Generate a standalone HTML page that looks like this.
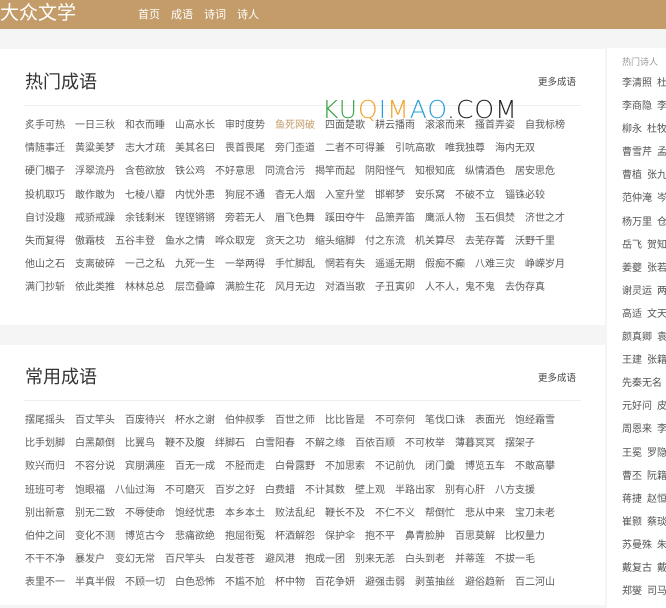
<!DOCTYPE html>
<html><head><meta charset="utf-8"><style>
*{margin:0;padding:0;box-sizing:border-box}
body{width:666px;height:595px;overflow:hidden;background:#f5f5f5;font-family:"Liberation Sans","Noto Sans CJK SC",sans-serif;position:relative}
.hd{position:absolute;left:0;top:0;width:666px;height:29px;background:#c49c69}
.logo{position:absolute;left:0;top:2px;font-size:19px;color:#fff;line-height:24px}
.nav{position:absolute;left:138px;top:8px;font-size:11px;color:#fff;line-height:14px}
.nav span{margin-right:11px}
.panel{position:absolute;left:0;width:605px;background:#fff}
.p1{top:49px;height:276px}
.p2{top:345px;height:260px}
.title{position:absolute;left:25px;font-size:18px;color:#333;line-height:22px}
.more{position:absolute;left:538px;font-size:9.5px;color:#444}
.line{position:absolute;left:24px;width:557px;height:1px;background:#eee}
.rows{position:absolute;left:25px;width:570px;font-size:10px;color:#5a5a5a}
.r{height:23.2px;line-height:14px;white-space:nowrap}
.r span{margin-right:10px}
.side{position:absolute;left:607px;top:48px;width:59px;height:560px;background:#fff;overflow:hidden}
.side .t{position:absolute;left:15px;top:7px;font-size:9px;color:#999}
.side .l{position:absolute;left:15px;top:29px;font-size:10px;color:#555;white-space:nowrap}
.side .l div{height:23.1px;line-height:14px}
.side span{margin-right:5px}
.wm{position:absolute;left:322px;top:97px;font-size:25px;line-height:26px;letter-spacing:1px;font-family:"DejaVu Sans",sans-serif;font-weight:300}
</style></head><body>
<div class="hd"><div class="logo">大众文学</div><div class="nav"><span>首页</span><span>成语</span><span>诗词</span><span>诗人</span></div></div>

<div class="panel p1">
<div class="title" style="top:22px">热门成语</div>
<div class="more" style="top:25px">更多成语</div>
<div class="line" style="top:56px"></div>
<div class="rows" style="top:70px">
<div class="r"><span>炙手可热</span><span>一日三秋</span><span>和衣而睡</span><span>山高水长</span><span>审时度势</span><span style="color:#c49c69">鱼死网破</span><span>四面楚歌</span><span>耕云播雨</span><span>滚滚而来</span><span>搔首弄姿</span><span>自我标榜</span></div>
<div class="r"><span>情随事迁</span><span>黄粱美梦</span><span>志大才疏</span><span>美其名曰</span><span>畏首畏尾</span><span>旁门歪道</span><span>二者不可得兼</span><span>引吭高歌</span><span>唯我独尊</span><span>海内无双</span></div>
<div class="r"><span>硬门楣子</span><span>浮翠流丹</span><span>含苞欲放</span><span>铁公鸡</span><span>不好意思</span><span>同流合污</span><span>揭竿而起</span><span>阴阳怪气</span><span>知根知底</span><span>纵情酒色</span><span>居安思危</span></div>
<div class="r"><span>投机取巧</span><span>敢作敢为</span><span>七棱八瓣</span><span>内忧外患</span><span>狗屁不通</span><span>杳无人烟</span><span>入室升堂</span><span>邯郸梦</span><span>安乐窝</span><span>不破不立</span><span>锱铢必较</span></div>
<div class="r"><span>自讨没趣</span><span>戒骄戒躁</span><span>余钱剩米</span><span>铿铿锵锵</span><span>旁若无人</span><span>眉飞色舞</span><span>蹊田夺牛</span><span>品箫弄笛</span><span>鹰派人物</span><span>玉石俱焚</span><span>济世之才</span></div>
<div class="r"><span>失而复得</span><span>傲霜枝</span><span>五谷丰登</span><span>鱼水之情</span><span>哗众取宠</span><span>贪天之功</span><span>缩头缩脚</span><span>付之东流</span><span>机关算尽</span><span>去芜存菁</span><span>沃野千里</span></div>
<div class="r"><span>他山之石</span><span>支离破碎</span><span>一己之私</span><span>九死一生</span><span>一举两得</span><span>手忙脚乱</span><span>惘若有失</span><span>遥遥无期</span><span>假痴不癫</span><span>八难三灾</span><span>峥嵘岁月</span></div>
<div class="r"><span>满门抄斩</span><span>依此类推</span><span>林林总总</span><span>层峦叠嶂</span><span>满脸生花</span><span>风月无边</span><span>对酒当歌</span><span>子丑寅卯</span><span>人不人，鬼不鬼</span><span>去伪存真</span></div>
</div>
</div>

<div class="wm"><span style="color:#2e9e3e">K</span><span style="color:#3aa84a">U</span><span style="color:#f0a22a">Q</span><span style="color:#2a9fd8">I</span><span style="color:#f0a22a">M</span><span style="color:#2a9fd8">A</span><span style="color:#2a9fd8">O</span><span style="color:#222">.COM</span></div>

<div class="panel p2">
<div class="title" style="top:21px">常用成语</div>
<div class="more" style="top:25px">更多成语</div>
<div class="line" style="top:55px"></div>
<div class="rows" style="top:69px">
<div class="r"><span>摆尾摇头</span><span>百丈竿头</span><span>百废待兴</span><span>杯水之谢</span><span>伯仲叔季</span><span>百世之师</span><span>比比皆是</span><span>不可奈何</span><span>笔伐口诛</span><span>表面光</span><span>饱经霜雪</span></div>
<div class="r"><span>比手划脚</span><span>白黑颠倒</span><span>比翼鸟</span><span>鞭不及腹</span><span>绊脚石</span><span>白雪阳春</span><span>不解之缘</span><span>百依百顺</span><span>不可枚举</span><span>薄暮冥冥</span><span>摆架子</span></div>
<div class="r"><span>败兴而归</span><span>不容分说</span><span>宾朋满座</span><span>百无一成</span><span>不胫而走</span><span>白骨露野</span><span>不加思索</span><span>不记前仇</span><span>闭门羹</span><span>博览五车</span><span>不敢高攀</span></div>
<div class="r"><span>班班可考</span><span>饱眼福</span><span>八仙过海</span><span>不可磨灭</span><span>百岁之好</span><span>白费蜡</span><span>不计其数</span><span>壁上观</span><span>半路出家</span><span>别有心肝</span><span>八方支援</span></div>
<div class="r"><span>别出新意</span><span>别无二致</span><span>不辱使命</span><span>饱经忧患</span><span>本乡本土</span><span>败法乱纪</span><span>鞭长不及</span><span>不仁不义</span><span>帮倒忙</span><span>悲从中来</span><span>宝刀未老</span></div>
<div class="r"><span>伯仲之间</span><span>变化不测</span><span>博览古今</span><span>悲痛欲绝</span><span>抱屈衔冤</span><span>杯酒解怨</span><span>保护伞</span><span>抱不平</span><span>鼻青脸肿</span><span>百思莫解</span><span>比权量力</span></div>
<div class="r"><span>不干不净</span><span>暴发户</span><span>变幻无常</span><span>百尺竿头</span><span>白发苍苍</span><span>避风港</span><span>抱成一团</span><span>别来无恙</span><span>白头到老</span><span>并蒂莲</span><span>不拔一毛</span></div>
<div class="r"><span>表里不一</span><span>半真半假</span><span>不顾一切</span><span>白色恐怖</span><span>不尴不尬</span><span>杯中物</span><span>百花争妍</span><span>避强击弱</span><span>剥茧抽丝</span><span>避俗趋新</span><span>百二河山</span></div>
</div>
</div>

<div class="side">
<div class="t">热门诗人</div>
<div class="l">
<div><span>李清照</span>杜甫</div>
<div><span>李商隐</span>李白</div>
<div><span>柳永</span>杜牧</div>
<div><span>曹雪芹</span>孟浩然</div>
<div><span>曹植</span>张九龄</div>
<div><span>范仲淹</span>岑参</div>
<div><span>杨万里</span>仓央</div>
<div><span>岳飞</span>贺知章</div>
<div><span>姜夔</span>张若虚</div>
<div><span>谢灵运</span>两宋</div>
<div><span>高适</span>文天祥</div>
<div><span>颜真卿</span>袁枚</div>
<div><span>王建</span>张籍</div>
<div><span>先秦无名</span></div>
<div><span>元好问</span>皮日休</div>
<div><span>周恩来</span>李贺</div>
<div><span>王冕</span>罗隐</div>
<div><span>曹丕</span>阮籍</div>
<div><span>蒋捷</span>赵恒</div>
<div><span>崔颢</span>蔡琰</div>
<div><span>苏曼殊</span>朱熹</div>
<div><span>戴复古</span>戴叔伦</div>
<div><span>郑燮</span>司马光</div>
</div>
</div>
</body></html>
